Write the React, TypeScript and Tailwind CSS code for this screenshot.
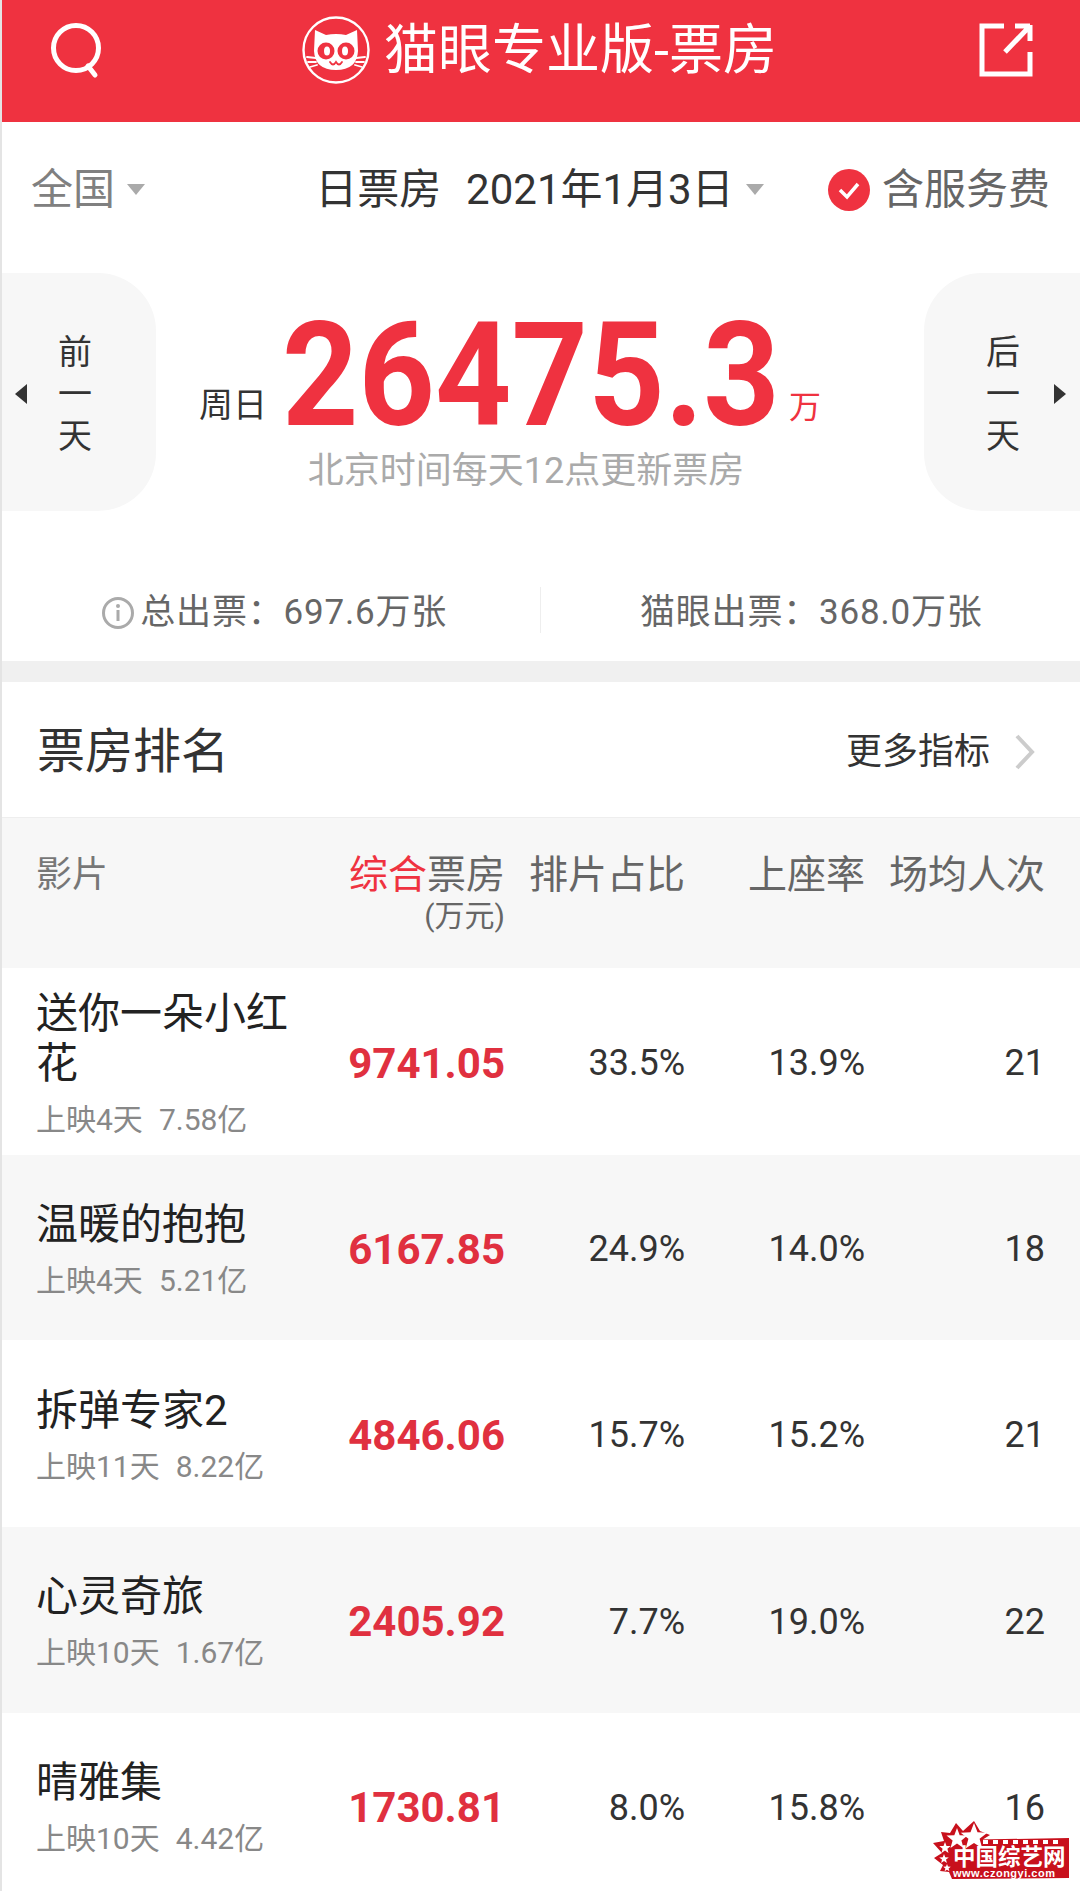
const font = "font-['Roboto','Noto_Sans_CJK_SC',sans-serif]";

const rows = [
  { name: "送你一朵小红花", sub: "上映4天", total: "7.58亿", box: "9741.05", share: "33.5%", seat: "13.9%", avg: "21", shade: false, h: "h-[187px]" },
  { name: "温暖的抱抱", sub: "上映4天", total: "5.21亿", box: "6167.85", share: "24.9%", seat: "14.0%", avg: "18", shade: true, h: "h-[185px]" },
  { name: "拆弹专家2", sub: "上映11天", total: "8.22亿", box: "4846.06", share: "15.7%", seat: "15.2%", avg: "21", shade: false, h: "h-[187px]" },
  { name: "心灵奇旅", sub: "上映10天", total: "1.67亿", box: "2405.92", share: "7.7%", seat: "19.0%", avg: "22", shade: true, h: "h-[186px]" },
  { name: "晴雅集", sub: "上映10天", total: "4.42亿", box: "1730.81", share: "8.0%", seat: "15.8%", avg: "16", shade: false, h: "h-[186px]" },
];

function starPoints(cx: number, cy: number, r: number) {
  const pts: string[] = [];
  for (let i = 0; i < 10; i++) {
    const rad = i % 2 === 0 ? r : r * 0.42;
    const a = -Math.PI / 2 + (i * Math.PI) / 5;
    pts.push(`${(cx + rad * Math.cos(a)).toFixed(1)},${(cy + rad * Math.sin(a)).toFixed(1)}`);
  }
  return pts.join(" ");
}

function CatLogo() {
  return (
    <svg width="70" height="70" viewBox="0 0 70 70" className="shrink-0">
      <circle cx="35" cy="35" r="32.500" fill="none" stroke="#fff" strokeWidth="2.400" />
      <path d="M14 15 L25 20 Q35 18 45 20 L56 15 L57 36 Q56 55 35 55 Q14 55 13 36 Z" fill="#fff" />
      <circle cx="25" cy="36" r="8.500" fill="#ef3240" />
      <circle cx="45" cy="36" r="8.500" fill="#ef3240" />
      <ellipse cx="26" cy="36" rx="3" ry="4.500" fill="#fff" />
      <ellipse cx="44" cy="36" rx="3" ry="4.500" fill="#fff" />
      <path d="M29 47 q3 5 6 0 q3 5 6 0" fill="none" stroke="#ef3240" strokeWidth="1.800" strokeLinecap="round" />
      <path d="M6 42 L15 43 M7 47 L15 47 M9 52 L16 50 M64 42 L55 43 M63 47 L55 47 M61 52 L54 50" stroke="#fff" strokeWidth="1.800" strokeLinecap="round" />
    </svg>
  );
}

function Triangle({ className }: { className: string }) {
  return <span className={`inline-block w-0 h-0 border-x-[9px] border-x-transparent border-t-[11px] ${className}`} />;
}

function DayCard({ side, chars }: { side: "left" | "right"; chars: string[] }) {
  const left = side === "left";
  return (
    <div className={`w-[156px] h-[238px] bg-[#f7f7f7] flex items-center pt-[3px] ${left ? "rounded-r-[58px] pl-[15px] gap-[31px]" : "rounded-l-[58px] pl-[62px] gap-[34px]"}`}>
      {left && <span className="w-0 h-0 border-y-[10px] border-y-transparent border-r-[12px] border-r-[#333]" />}
      <div className="flex flex-col items-center gap-[6px] text-[34px] leading-[36px] text-[#333]">
        {chars.map((c) => (
          <span key={c}>{c}</span>
        ))}
      </div>
      {!left && <span className="w-0 h-0 border-y-[10px] border-y-transparent border-l-[12px] border-l-[#333]" />}
    </div>
  );
}

function Watermark() {
  return (
    <svg width="140" height="60" viewBox="0 0 140 60" className="absolute left-[930px] top-[1821px]">
      <path d="M20 19 L137 17 L137 57 L20 58 L17 51 L8 50 L11 44 L2 37 L10 32 L1 22 L12 20 L9 11 L18 12 L24 2 L31 10 L42 0 L48 10 L58 14 L50 19 Z" fill="#c8101c" />
      <polygon points={starPoints(25, 18, 11)} fill="#fff" />
      <polygon points={starPoints(42, 16, 14)} fill="#fff" />
      <polygon points={starPoints(13, 27, 6)} fill="#fff" />
      <polygon points={starPoints(12, 38, 5)} fill="#fff" />
      <polygon points={starPoints(15, 47, 4)} fill="#fff" />
      <path d="M51 19 h5 v4 h-5 Z M61 19 h5 v4 h-5 Z M71 19 h5 v4 h-5 Z M81 19 h5 v4 h-5 Z M91 19 h5 v4 h-5 Z M101 19 h5 v4 h-5 Z M111 19 h5 v4 h-5 Z M121 19 h5 v4 h-5 Z" fill="#fff" />
      <text x="21" y="44" fontSize="22.500" fontWeight="700" fill="#fff" fontFamily="'Noto Sans CJK SC', sans-serif">中国综艺网</text>
      <text x="21" y="56" fontSize="11" fontWeight="700" letterSpacing="0.5" fill="#fff" fontFamily="'Liberation Sans', sans-serif">www.czongyi.com</text>
    </svg>
  );
}

export default function App() {
  return (
    <div className={`relative w-[1080px] h-[1891px] overflow-hidden bg-white border-l-2 border-l-[#e4e4e4] ${font}`}>
      <header className="h-[122px] bg-[#ef3240] flex items-start justify-between pl-[48px] pr-[46px] pt-[20px]">
        <svg width="56" height="60" viewBox="0 0 56 60" className="mt-[1px]" fill="none" stroke="#fff" strokeWidth="5">
          <circle cx="26" cy="27" r="22.500" />
          <path d="M38 45 L45 54" strokeLinecap="round" />
        </svg>
        <div className="flex items-center gap-[12px] text-white text-[54px] leading-[70px] -ml-[6px] -mt-[7px]">
          <CatLogo />
          <span className="mt-[3px] ml-[1px]">猫眼专业版-票房</span>
        </div>
        <svg width="56" height="56" viewBox="0 0 56 56" fill="none" stroke="#fff" strokeWidth="5" className="mt-[2px]">
          <path d="M26 4 H4 V52 H52 V30" />
          <path d="M52 3 V19 M37 4 H52 M52 4 L27 30" />
        </svg>
      </header>

      <div className="h-[133px] flex items-center justify-between pl-[29px] pr-[30px] pt-[2px]">
        <div className="flex items-center gap-[12px] text-[42px] text-[#808080]">
          <span>全国</span>
          <Triangle className="border-t-[#aaa]" />
        </div>
        <div className="flex items-center gap-[12px] text-[42px] text-[#333] ml-[106px]">
          <span className="whitespace-pre [word-spacing:2px]">日票房  2021年1月3日</span>
          <Triangle className="border-t-[#aaa]" />
        </div>
        <div className="flex items-center gap-[12px] text-[42px] text-[#666]">
          <svg width="42" height="42" viewBox="0 0 42 42">
            <circle cx="21" cy="21" r="21" fill="#ef3240" />
            <path d="M12 21 L19 28 L30 15" fill="none" stroke="#fff" strokeWidth="3.500" />
          </svg>
          <span>含服务费</span>
        </div>
      </div>

      <div className="mt-[18px] h-[238px] flex justify-between -ml-[2px]">
        <DayCard side="left" chars={["前", "一", "天"]} />
        <div className="flex flex-col items-center w-[680px]">
          <div className="flex items-end h-[176px] w-full -ml-[2px]">
            <span className="text-[34px] leading-[40px] text-[#333] mb-[24px] whitespace-nowrap">周日</span>
            <span className="inline-block w-[491px] ml-[15px] text-[145px] leading-[120px] font-bold text-[#ef3240] origin-left scale-x-[0.92] whitespace-nowrap mb-[14px]">26475.3</span>
            <span className="text-[32px] leading-[36px] text-[#ef3240] ml-[16px] mb-[24px]">万</span>
          </div>
          <div className="text-[36px] leading-[44px] text-[#aaa] -ml-[28px]">北京时间每天12点更新票房</div>
        </div>
        <DayCard side="right" chars={["后", "一", "天"]} />
      </div>

      <div className="h-[150px] pt-[76px] flex">
        <div className="w-[538px] flex items-start justify-end pr-[93px] gap-[6px] text-[#666] text-[35px] leading-[52px]">
          <svg width="32" height="32" viewBox="0 0 32 32" className="mt-[10px]">
            <circle cx="16" cy="16" r="14.500" fill="none" stroke="#aaa" strokeWidth="3" />
            <circle cx="16" cy="9" r="2" fill="#aaa" />
            <rect x="14.500" y="13" width="3" height="11" fill="#aaa" />
          </svg>
          <span className="tracking-[0.8px] whitespace-nowrap">总出票：697.6万张</span>
        </div>
        <div className="w-px h-[46px] bg-[#eeeeee]" />
        <div className="flex-1 pl-[99px] text-[#666] text-[35px] leading-[52px] tracking-[0.8px] whitespace-nowrap">猫眼出票：368.0万张</div>
      </div>

      <div className="h-[21px] bg-[#f0f0f0]" />

      <div className="h-[135px] flex items-center justify-between pl-[35px] pr-[44px] pt-[4px]">
        <h2 className="text-[48px] text-[#333]">票房排名</h2>
        <div className="flex items-center gap-[24px] text-[36px] text-[#333]">
          <span>更多指标</span>
          <svg width="22" height="36" viewBox="0 0 22 36" fill="none" stroke="#ccc" strokeWidth="4">
            <path d="M3 2 L18 18 L3 34" />
          </svg>
        </div>
      </div>

      <div className="h-[151px] bg-[#f7f7f7] border-t border-t-[#eeeeee] pl-[34px] grid grid-cols-[281px_188px_180px_180px_180px] pt-[31px] text-[39px] leading-[52px] text-[#666] text-right">
        <div className="text-left text-[#777] text-[36px]">影片</div>
        <div>
          <div className="whitespace-nowrap">
            <span className="text-[#ef3240]">综合</span>票房
          </div>
          <div className="text-[30px] leading-[36px] -mt-[3px]">(万元)</div>
        </div>
        <div className="whitespace-nowrap">排片占比</div>
        <div className="whitespace-nowrap">上座率</div>
        <div className="whitespace-nowrap">场均人次</div>
      </div>

      {rows.map((r) => (
        <div
          key={r.name}
          className={`${r.h} pl-[34px] pt-[3px] grid grid-cols-[281px_188px_180px_180px_180px] items-center text-right text-[#333] text-[36px] ${r.shade ? "bg-[#f7f7f7]" : "bg-white"}`}
        >
          <div className="text-left">
            <div className="text-[42px] leading-[50px] text-[#222]">{r.name}</div>
            <div className="flex gap-[16px] mt-[13px] text-[30px] leading-[36px] text-[#888]">
              <span>{r.sub}</span>
              <span>{r.total}</span>
            </div>
          </div>
          <div className="text-[42px] font-bold text-[#e0303f]">{r.box}</div>
          <div>{r.share}</div>
          <div>{r.seat}</div>
          <div>{r.avg}</div>
        </div>
      ))}

      <Watermark />
    </div>
  );
}
